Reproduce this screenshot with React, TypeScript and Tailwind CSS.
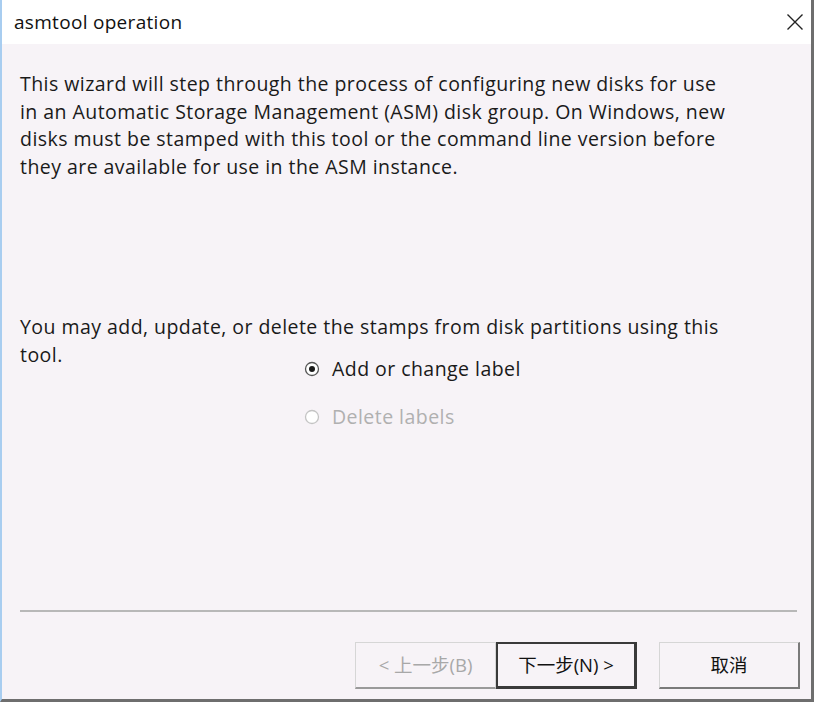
import React from 'react';

const font = { fontFamily: '"Open Sans", "Noto Sans CJK SC", sans-serif' };

const Radio = ({ checked, disabled }: { checked?: boolean; disabled?: boolean }) => (
  <svg width="16" height="16" viewBox="0 0 16 16" className="shrink-0">
    <circle cx="8" cy="8" r="6.5" fill="#ffffff" stroke={disabled ? '#c4c4c4' : '#555555'} strokeWidth="1.3" />
    {checked && <circle cx="8" cy="8" r="3" fill="#1a1a1a" />}
  </svg>
);

export default function App() {
  return (
    <div className="w-[818px] h-[704px] bg-white" style={font}>
      <div className="w-[814px] h-[702px] flex flex-col bg-[#f7f3f7] border-l-2 border-l-[#a8cdf0] border-r-[3px] border-r-[#6e6e6e] border-b-[3px] border-b-[#6e6e6e]">
        {/* title bar */}
        <div className="h-[44px] bg-white flex items-center justify-between pl-[12px] pr-[7px] shrink-0">
          <span className="text-[19px] tracking-[0.3px] text-[#111]">asmtool operation</span>
          <svg width="18" height="18" viewBox="0 0 18 18">
            <path d="M1.5 1.5 L16.5 16.5 M16.5 1.5 L1.5 16.5" stroke="#222" strokeWidth="1.4" />
          </svg>
        </div>

        <div className="flex-1 flex flex-col pl-[18px] pr-[14px]">
          <p className="mt-[26px] text-[19.5px] tracking-[0.45px] leading-[27.5px] text-[#1a1a1a] w-[706px]">
            This wizard will step through the process of configuring new disks for use in an Automatic Storage Management (ASM) disk group. On Windows, new disks must be stamped with this tool or the command line version before they are available for use in the ASM instance.
          </p>

          <p className="mt-[133px] text-[19.5px] tracking-[0.45px] leading-[27.5px] text-[#1a1a1a] w-[706px]">
            You may add, update, or delete the stamps from disk partitions using this tool.
          </p>

          <div className="ml-[284px] -mt-[11px] flex flex-col gap-[24px]">
            <label className="flex items-center gap-[12px] h-[24px] text-[19.5px] tracking-[0.45px] text-[#1a1a1a]">
              <Radio checked />
              Add or change label
            </label>
            <label className="flex items-center gap-[12px] h-[24px] text-[19.5px] tracking-[0.45px] text-[#b0b0b0]">
              <Radio disabled />
              Delete labels
            </label>
          </div>

          <div className="mt-auto mb-[30px] border-t-2 border-[#b8b8b8]" />

          <div className="flex justify-end items-center mb-[10px] -mr-[3px]">
            <button className="w-[141px] h-[47px] bg-[#f7f3f7] border border-[#d6d6d6] border-b-2 border-b-[#9a9a9a] text-[18.5px] text-[#a8a8a8]">
              &lt; 上一步(B)
            </button>
            <button className="w-[141px] h-[47px] bg-[#f7f3f7] border-2 border-[#3a3a3a] border-r-[3px] border-b-[3px] text-[18.5px] text-[#111]">
              下一步(N) &gt;
            </button>
            <button className="ml-[22px] w-[141px] h-[47px] bg-[#f7f3f7] border border-[#d6d6d6] border-r-2 border-r-[#7a7a7a] border-b-2 border-b-[#7a7a7a] text-[18.5px] text-[#111]">
              取消
            </button>
          </div>
        </div>
      </div>
    </div>
  );
}
